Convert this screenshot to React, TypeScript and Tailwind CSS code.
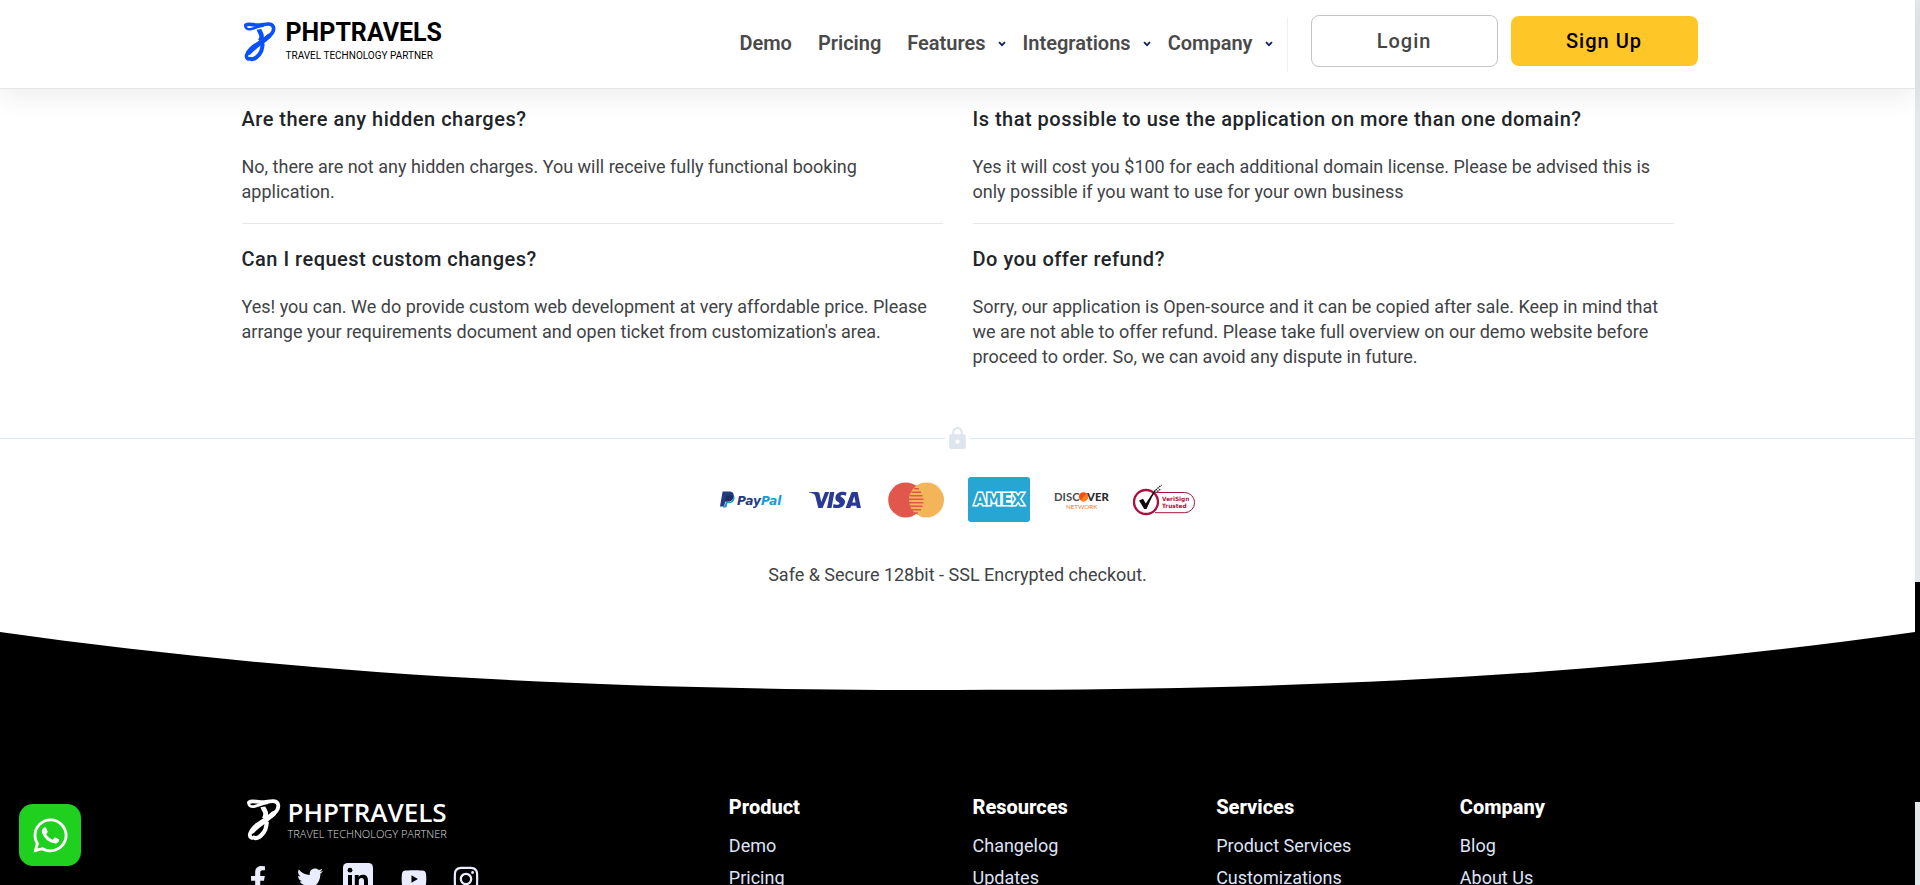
import React from "react";
import { FaFacebookF, FaTwitter, FaYoutube, FaInstagram, FaWhatsapp } from "react-icons/fa";
import { MdLock } from "react-icons/md";

function LogoMark({ className }: { className: string }) {
  return (
    <svg viewBox="0 0 32 40" className={className} fill="none" stroke="currentColor" strokeLinecap="round" strokeLinejoin="round" aria-hidden="true">
      <path d="M1.8 3.2C4 1.2 8.500 3 13 3 18 3 21.500 1.800 25 2 30.800 2.600 31 8.500 26.500 13 21 18.600 12 21.500 7 26.500 2.500 31 1 35.500 4.200 37" strokeWidth="3.600" />
      <path d="M1.600 3.200C.8 6 3.400 7.800 7.200 7 11.500 6 15 4.200 19 3.600" strokeWidth="2.600" />
      <path d="M15 7.400C15.400 10 17.800 11.400 17.600 14.600 17.500 16.600 17 17.600 16 19" strokeWidth="4.600" strokeLinecap="butt" />
      <path d="M18.600 22.600C17.800 26.500 18.400 28.600 15.600 32 12.600 35.800 9 38 6.400 36.800" strokeWidth="4" />
      <path d="M5 30.500C9.500 25 18 20.500 25 14" strokeWidth="4.800" />
    </svg>
  );
}

const nav = [
  { label: "Demo", menu: false },
  { label: "Pricing", menu: false },
  { label: "Features", menu: true },
  { label: "Integrations", menu: true },
  { label: "Company", menu: true },
];

const faqs = [
  { q: "Are there any hidden charges?", a: "No, there are not any hidden charges. You will receive fully functional booking application." },
  { q: "Is that possible to use the application on more than one domain?", a: "Yes it will cost you $100 for each additional domain license. Please be advised this is only possible if you want to use for your own business" },
  { q: "Can I request custom changes?", a: "Yes! you can. We do provide custom web development at very affordable price. Please arrange your requirements document and open ticket from customization's area." },
  { q: "Do you offer refund?", a: "Sorry, our application is Open-source and it can be copied after sale. Keep in mind that we are not able to offer refund. Please take full overview on our demo website before proceed to order. So, we can avoid any dispute in future." },
];

const footerColumns = [
  { title: "Product", links: ["Demo", "Pricing"] },
  { title: "Resources", links: ["Changelog", "Updates"] },
  { title: "Services", links: ["Product Services", "Customizations"] },
  { title: "Company", links: ["Blog", "About Us"] },
];

function Header() {
  return (
    <header className="relative z-10 border-b border-[#e6e6e8] bg-white shadow-[0_8px_24px_rgba(40,40,70,0.08)]">
      <div className="mx-auto flex h-[88px] max-w-[1484px] items-center justify-between pl-[28px] pr-[2px]">
        <a href="#home" className="flex items-start gap-[10px] pb-[6px] text-black">
          <LogoMark className="mt-[1px] h-[40px] w-[32px] text-[#0a50ff]" />
          <span className="block">
            <span className="block text-[25px] font-bold leading-[24px]">PHPTRAVELS</span>
            <span className="block pt-[5px] text-[10px] leading-[12px]">TRAVEL TECHNOLOGY PARTNER</span>
          </span>
        </a>
        <div className="flex items-center">
          <nav className="mr-[14px] flex items-center pb-[2px] text-[20px] font-semibold leading-[24px] text-[#4a4a4a]">
            {nav.map((item) => (
              <a key={item.label} href="#nav" className={item.menu ? "mr-[17px] flex items-center gap-[12px] last:mr-0" : "mr-[26px]"}>
                {item.label}
                {item.menu && (
                  <svg viewBox="0 0 8 6" className="mt-[2px] h-[6px] w-[8px]" fill="none" stroke="#13225c" strokeWidth="1.8" aria-hidden="true">
                    <path d="M1 1.2 4 4.2 7 1.2" />
                  </svg>
                )}
              </a>
            ))}
          </nav>
          <div className="mr-[23px] h-[55px] w-px bg-[#f0f0f2]" />
          <div className="flex items-center gap-[13px] pb-[6px]">
            <button type="button" className="h-[52px] w-[187px] rounded-[8px] border border-[#c4c4c8] text-[20px] font-medium tracking-wider text-[#454545]">Login</button>
            <button type="button" className="h-[50px] w-[187px] rounded-[8px] bg-[#ffc627] text-[20px] font-medium tracking-wider text-black">Sign Up</button>
          </div>
        </div>
      </div>
    </header>
  );
}

function PayPal() {
  return (
    <svg viewBox="0 0 62 18" className="h-[18px] w-[62px]" role="img" aria-label="PayPal">
      <path d="M2.6.6H9c3.4 0 5.2 1.8 4.6 5-.6 3.4-2.8 5-6.2 5H5.2L4.2 15.4H0z" fill="#253b80" />
      <path d="M13.8 4.400c.8 1 .9 2.200.600 3.600-.7 3-2.600 4.200-5.600 4.200H7.400L6.500 16.600H3l.3-1.600h1.400l1-4.100h2.100c3.400 0 5.500-1.800 6-6.500z" fill="#179bd7" />
      <path d="M6.200 5.200c.2-.6.600-.9 1.200-.9h4.200c1 0 1.800.1 2.200.4-.4 3.700-2.600 5.900-6 5.900H5z" fill="#222d65" />
      <text x="17" y="14" fontFamily="DejaVu Sans" fontSize="12.200" fontWeight="700" fontStyle="italic" fill="#253b80">Pay<tspan fill="#179bd7">Pal</tspan></text>
    </svg>
  );
}

function Visa() {
  return (
    <svg viewBox="0 0 54 18" className="h-[18px] w-[54px]" role="img" aria-label="Visa">
      <path d="M0 1h8.200c1.200 0 2 .5 2.300 1.700l1.800 8.200L16 1h4.200L13.600 17H9.300L6.200 4.700C5.700 2.700 3 1.900 0 1.500z" fill="#2a3a94" />
      <path d="M21 1h4.400L22.500 17h-4.400z" fill="#2a3a94" />
      <path d="M37.500 1.500l-.7 3.200c-1.400-.6-5-1.200-5.200.5-.1 1.300 4.800 2 4.400 5.800-.4 4.600-4.600 6.300-8.400 6.100-1.500 0-2.800-.2-3.700-.6l.7-3.400c1.400.7 5.600 1.400 6-.5.2-1.600-4.500-1.900-4.200-5.900C26.700 1.500 33.100-.2 37.500 1.500z" fill="#2a3a94" />
      <path fillRule="evenodd" d="M44 1h4.600L51.900 17h-4.100l-.5-2.300h-5L41.200 17h-4.600L42 2.400C42.400 1.400 43 1 44 1zm1.200 4.200-1.900 6.400h3.300z" fill="#2a3a94" />
    </svg>
  );
}

function Mastercard() {
  return (
    <svg viewBox="0 0 56 36" className="h-[36px] w-[56px]" role="img" aria-label="Mastercard">
      <circle cx="17.700" cy="18" r="17.500" fill="#e2574c" />
      <circle cx="38.500" cy="18" r="17.500" fill="#f4b459" />
      <path d="M26 6.800h5M23.500 10.300h9.500M22 13.800h12.500M21 17.300h14.500M21 20.800h14.500M22 24.300h12.500M23.500 27.800h9.500M26 31h4" stroke="#e2574c" strokeWidth="1.500" />
    </svg>
  );
}

function Amex() {
  return (
    <svg viewBox="0 0 62 45" className="h-[45px] w-[62px]" role="img" aria-label="American Express">
      <rect width="62" height="45" rx="3" fill="#27a6d3" />
      <text x="6" y="28.200" fontFamily="DejaVu Sans" fontSize="15.500" fontWeight="700" fill="#27a6d3" stroke="#fff" strokeWidth="3" paintOrder="stroke">AMEX</text>
    </svg>
  );
}

function Discover() {
  return (
    <svg viewBox="0 0 56 20" className="h-[20px] w-[56px]" role="img" aria-label="Discover Network">
      <text x="0" y="11" fontFamily="Lato" fontSize="11.300" fontWeight="700" fill="#4d4d4f">DISC</text>
      <circle cx="29.500" cy="6.800" r="4.600" fill="#f4510b" />
      <path d="M26.500 10.300 32.800 3.600A4.600 4.600 0 0 1 26.500 10.300z" fill="#ff8120" />
      <text x="33" y="11" fontFamily="Lato" fontSize="11.300" fontWeight="900" fill="#2b2b2d">VER</text>
      <text x="12" y="18.500" fontFamily="Lato" fontSize="6.200" fill="#f07a25">NETWORK</text>
    </svg>
  );
}

function Verisign() {
  return (
    <svg viewBox="0 0 62 32" className="h-[32px] w-[62px]" role="img" aria-label="VeriSign Trusted">
      <path d="M24 8.500h27.500a9.900 9.900 0 0 1 0 20.200H22" fill="none" stroke="#a8123e" strokeWidth="1" />
      <circle cx="13" cy="18" r="12" fill="#fff" stroke="#a8123e" strokeWidth="2.400" />
      <path d="M6 16.500 10 14.800 12.800 19.500 20 8.500 23.500 5.500 19 13 13.500 25H11.200z" fill="#0c0c0c" />
      <path d="M21 7.500 28.500 1M22.500 9 27.500 5" stroke="#222" strokeWidth="1.300" strokeDasharray="1.500 .8" />
      <text x="29" y="17" fontFamily="DejaVu Sans" fontSize="5.800" fontWeight="700" fill="#a8123e">VeriSign</text>
      <text x="29" y="24" fontFamily="DejaVu Sans" fontSize="5.800" fontWeight="700" fill="#a8123e">Trusted</text>
    </svg>
  );
}

function LinkedIn() {
  return (
    <svg viewBox="0 0 30 30" className="h-[30px] w-[30px]" aria-hidden="true">
      <rect width="30" height="30" rx="4.500" fill="currentColor" />
      <g fill="#000">
        <circle cx="7" cy="7.200" r="2.400" />
        <path d="M5 12h4v13H5zM11.800 12h3.900v1.900c.8-1.400 2.300-2.200 4.200-2.200 3.900 0 5.100 2.300 5.100 6.300v7h-4v-6.500c0-2-.4-3.400-2.400-3.400-2.100 0-2.800 1.500-2.800 3.400V25h-4z" />
      </g>
    </svg>
  );
}

function Payments() {
  return (
    <section className="flex flex-col items-center">
      <div className="flex h-[24px] w-full items-center">
        <span className="h-px flex-1 bg-[#dfe5ec]" />
        <MdLock className="h-[25px] w-[25px] text-[#dfe5ec]" aria-hidden="true" />
        <span className="h-px flex-1 bg-[#dfe5ec]" />
      </div>
      <div className="mt-[27px] flex h-[45px] items-center">
        <PayPal />
        <span className="w-[27px]" />
        <Visa />
        <span className="w-[25px]" />
        <Mastercard />
        <span className="w-[24px]" />
        <Amex />
        <span className="w-[24px]" />
        <Discover />
        <span className="w-[23px]" />
        <Verisign />
      </div>
      <p className="mt-[40px] text-[18px] leading-[25px] text-[#404346]">Safe &amp; Secure 128bit - SSL Encrypted checkout.</p>
    </section>
  );
}

function Footer() {
  return (
    <footer className="mt-[45px] bg-black">
      <svg viewBox="0 0 1915 58" preserveAspectRatio="none" className="block h-[58px] w-full" aria-hidden="true">
        <path d="M0 0C300 42 580 58 957 58S1615 42 1915 0z" fill="#fff" />
      </svg>
      <div className="mx-auto grid max-w-[1432px] grid-cols-12 gap-x-[30px] pt-[104px]">
        <div className="col-span-4">
          <a href="#home" className="ml-[5px] mt-[5px] flex items-start gap-[7px] text-white">
            <LogoMark className="h-[42px] w-[34px]" />
            <span className="block font-['Open_Sans']">
              <span className="block text-[26px] font-semibold leading-[26px]">PHPTRAVELS</span>
              <span className="block pt-[2px] text-[11px] font-light leading-[14px] text-[#ddd]">TRAVEL TECHNOLOGY PARTNER</span>
            </span>
          </a>
          <div className="mt-[22px] flex items-start text-[#e9edff]">
            <a href="#facebook" aria-label="Facebook" className="ml-[3px] mt-[3px]"><FaFacebookF className="h-[26px] w-[26px]" /></a>
            <a href="#twitter" aria-label="Twitter" className="ml-[26px] mt-[3px]"><FaTwitter className="h-[26px] w-[26px]" /></a>
            <a href="#linkedin" aria-label="LinkedIn" className="ml-[20px]"><LinkedIn /></a>
            <a href="#youtube" aria-label="YouTube" className="ml-[28px] mt-[3px]"><FaYoutube className="h-[26px] w-[26px]" /></a>
            <a href="#instagram" aria-label="Instagram" className="ml-[25px] mt-[2px]"><FaInstagram className="h-[28px] w-[28px]" /></a>
          </div>
        </div>
        {footerColumns.map((col) => (
          <div key={col.title} className="col-span-2">
            <h3 className="text-[20px] font-extrabold leading-[26px] text-white">{col.title}</h3>
            <ul className="mt-[10px] text-[18px] leading-[32px] text-[#dfe3f7]">
              {col.links.map((l) => (
                <li key={l}><a href="#link">{l}</a></li>
              ))}
            </ul>
          </div>
        ))}
      </div>
    </footer>
  );
}

export default function App() {
  return (
    <div className="flex h-screen overflow-hidden bg-white font-[Roboto,sans-serif]">
      <div className="min-w-0 flex-1">
        <Header />
        <main>
          <section className="mx-auto grid max-w-[1432px] grid-cols-2 gap-x-[30px] pt-[17px]">
            {faqs.map((f, i) => (
              <article key={f.q} className={i < 2 ? "mb-[22px] border-b border-[#e6e8ea] pb-[19px]" : "pb-[57px]"}>
                <h2 className="text-[20px] font-medium leading-[26px] tracking-wide text-[#212529]">{f.q}</h2>
                <p className="mt-[22px] text-[18px] leading-[25px] text-[#404346]">{f.a}</p>
              </article>
            ))}
          </section>
          <Payments />
        </main>
        <Footer />
      </div>
      <div className="w-[5px] bg-[#e4e8ec] pt-[582px]" aria-hidden="true">
        <div className="h-[220px] bg-black" />
      </div>
      <a href="#whatsapp" aria-label="WhatsApp" className="fixed bottom-[19px] left-[19px] flex h-[62px] w-[62px] items-center justify-center rounded-[14px] bg-[#1fd01f] text-white">
        <FaWhatsapp className="h-[39px] w-[39px]" />
      </a>
    </div>
  );
}
